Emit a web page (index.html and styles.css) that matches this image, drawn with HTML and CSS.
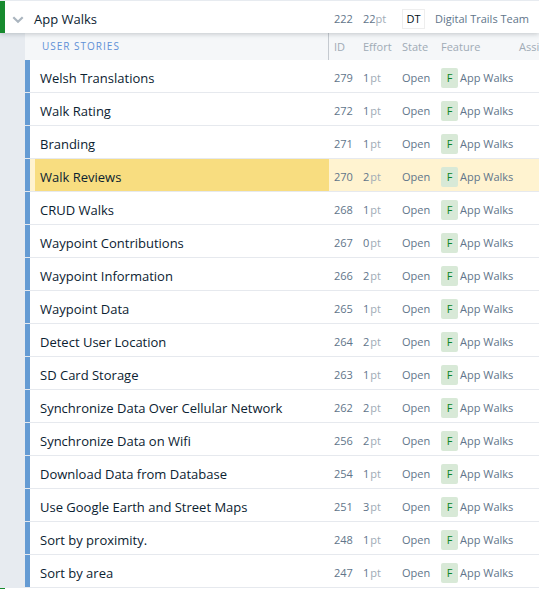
FILE: index.html
```
<!DOCTYPE html>
<html lang="en">
<head>
<meta charset="utf-8">
<title>App Walks</title>
<link rel="stylesheet" href="styles.css">
</head>
<body>
<div class="feature">
  <svg class="chevron" width="12" height="8" viewBox="0 0 12 8"><path d="M1.3 1.2 6 5.800l4.700-4.600" fill="none" stroke="#aab5bf" stroke-width="2.200"/></svg>
  <div class="feature-name">App Walks</div>
  <div class="id">222</div>
  <div class="effort">22<span class="unit">pt</span></div>
  <div class="team"><span class="team-badge">DT</span></div>
  <div class="team-name">Digital Trails Team</div>
</div>
<div class="stories">
  <div class="heading">
    <div class="heading-title">USER STORIES</div>
    <div class="id">ID</div><div class="effort">Effort</div><div class="state">State</div><div class="parent">Feature</div><div class="assigned">Assigned</div>
  </div>
  <div id="rows"></div>
</div>
<div class="next-feature"></div>
<script src="rows.js"></script>
</body>
</html>
```
FILE: styles.css
```
* { box-sizing: border-box; }
body {
  margin: 0;
  width: 539px;
  height: 589px;
  overflow: hidden;
  background: #fff;
  color: #61758a;
  font: 11px/16px "Open Sans", "Noto Sans", sans-serif;
  white-space: nowrap;
}
.feature {
  position: relative;
  display: flex;
  align-items: center;
  height: 33px;
  padding-top: 4px;
  border-top: 1px solid #e7ebf0;
  background: linear-gradient(#178a2e, #178a2e) 0 0 / 5px 100% no-repeat #fff;
  box-shadow: 0 1px 5px rgba(40, 50, 60, .25);
}
.chevron { flex: none; margin: 1px 10px 0 12px; }
.feature-name { flex: none; width: 300px; color: #0b2231; font-size: 13px; }
.id { flex: none; width: 29px; }
.effort { flex: none; width: 39px; }
.unit { color: #a0abb6; }
.row .unit { margin-left: 1px; }
.state { flex: none; width: 39px; }
.parent { flex: none; display: flex; align-items: center; width: 78px; }
.team { flex: none; width: 33px; }
.team-badge {
  display: block;
  width: 23px;
  height: 20px;
  border: 1px solid #eee;
  color: #001018;
  line-height: 18px;
  text-align: center;
}
.stories { padding-left: 25px; background: #e7ebf0; }
.heading { display: flex; height: 27px; background: #f5f7f9; color: #a0abb6; line-height: 28px; }
.heading .parent { align-items: flex-start; }
.heading-title {
  flex: none;
  width: 304px;
  margin-right: 5px;
  padding-left: 17px;
  border-right: 1px solid #c5cad0;
  color: #5f90d6;
  font-size: 10px;
  line-height: 26px;
  letter-spacing: 1px;
}
.row {
  display: flex;
  align-items: center;
  height: 33px;
  border-bottom: 1px solid #e6e9ee;
  background: linear-gradient(#659bd3, #659bd3) 0 0 / 5px 100% no-repeat #fff;
}
.name {
  flex: none;
  width: 294px;
  height: 32px;
  margin: 0 5px 0 10px;
  padding-left: 5px;
  color: #0b2231;
  font-size: 13px;
  line-height: 36px;
}
.row > .id, .row > .effort, .row > .state, .row .parent { padding-top: 3px; }
.badge {
  width: 17px;
  height: 20px;
  margin-right: 2px;
  border-radius: 2px;
  background: #d8e9d7;
  color: #0c8426;
  line-height: 20px;
  text-align: center;
}
.selected { background-color: #fff3d0; }
.selected .name { background: #f8dd80; }
.next-feature { width: 5px; height: 1px; background: #178a2e; }
```
FILE: rows.js
```
const stories = [
  ["Welsh Translations", 279, 1],
  ["Walk Rating", 272, 1],
  ["Branding", 271, 1],
  ["Walk Reviews", 270, 2],
  ["CRUD Walks", 268, 1],
  ["Waypoint Contributions", 267, 0],
  ["Waypoint Information", 266, 2],
  ["Waypoint Data", 265, 1],
  ["Detect User Location", 264, 2],
  ["SD Card Storage", 263, 1],
  ["Synchronize Data Over Cellular Network", 262, 2],
  ["Synchronize Data on Wifi", 256, 2],
  ["Download Data from Database", 254, 1],
  ["Use Google Earth and Street Maps", 251, 3],
  ["Sort by proximity.", 248, 1],
  ["Sort by area", 247, 1]
];
document.getElementById("rows").innerHTML = stories.map(([name, id, points]) => `
  <div class="row${id === 270 ? " selected" : ""}">
    <div class="name">${name}</div>
    <div class="id">${id}</div>
    <div class="effort">${points}<span class="unit">pt</span></div>
    <div class="state">Open</div>
    <div class="parent"><span class="badge">F</span><span class="parent-name">App Walks</span></div>
  </div>`).join("");
```
